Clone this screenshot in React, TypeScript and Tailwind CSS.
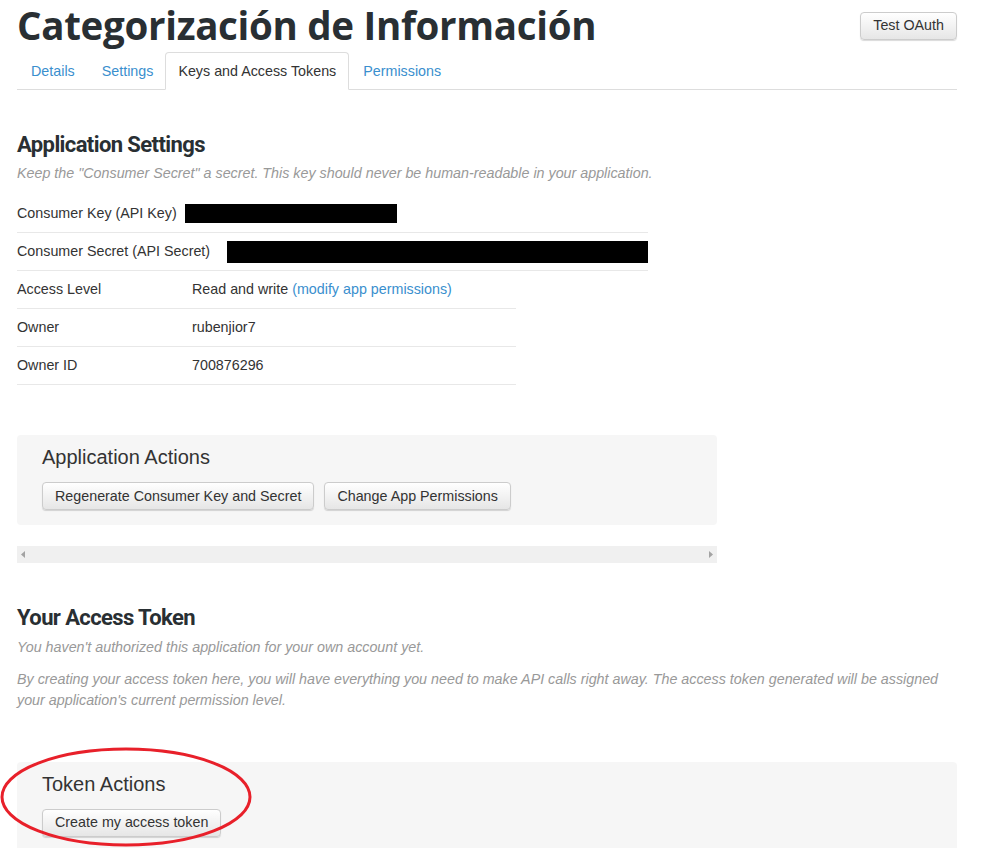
import React from 'react';

const body = { fontFamily: '"Liberation Sans", Arial, sans-serif' };
const heading = { fontFamily: 'Roboto, "Open Sans", sans-serif' };

function Btn({ children }: { children: React.ReactNode }) {
  return (
    <button className="h-[28px] px-3 text-[14.3px] text-[#333] border border-[#ccc] rounded-[4px] bg-gradient-to-b from-white to-[#e6e6e6] shadow-[0_1px_1px_rgba(0,0,0,0.15)] whitespace-nowrap">
      {children}
    </button>
  );
}

function Row({ label, children, width, labelWidth = 'w-[175px]' }: { label: string; children: React.ReactNode; width: string; labelWidth?: string }) {
  return (
    <div className={`flex items-center h-[38px] border-b border-[#e8e8e8] text-[14.3px] text-[#333] ${width}`}>
      <div className={labelWidth}>{label}</div>
      <div>{children}</div>
    </div>
  );
}

export default function App() {
  return (
    <div className="relative w-[992px] h-[848px] overflow-hidden bg-white px-[17px]" style={body}>
      {/* header */}
      <div className="flex items-start justify-between w-[940px] pt-[1px]">
        <h1 className="text-[38.5px] leading-[48px] font-bold text-[#292f33] tracking-[-0.3px]" style={{ fontFamily: '"Open Sans", sans-serif' }}>
          Categorización de Información
        </h1>
        <div className="mt-[11px]">
          <Btn>Test OAuth</Btn>
        </div>
      </div>

      {/* tabs */}
      <div className="flex w-[940px] border-b border-[#ddd] mt-[3px] text-[14.3px]">
        <a className="px-[14px] h-[37px] flex items-center pt-[2px] text-[#3a8fce]">Details</a>
        <a className="pl-[13px] pr-[12px] h-[37px] flex items-center pt-[2px] text-[#3a8fce]">Settings</a>
        <a className="px-[12px] h-[38px] -mb-px flex items-center pt-[2px] text-[#333] bg-white border border-[#ddd] border-b-white rounded-t-[4px]">Keys and Access Tokens</a>
        <a className="px-[14px] h-[37px] flex items-center pt-[2px] text-[#3a8fce]">Permissions</a>
      </div>

      {/* application settings */}
      <h2 className="mt-[42px] text-[22px] leading-[26px] font-bold text-[#292f33] tracking-[-0.6px]" style={heading}>
        Application Settings
      </h2>
      <p className="mt-[5px] text-[14.3px] italic text-[#999]">
        Keep the "Consumer Secret" a secret. This key should never be human-readable in your application.
      </p>
      <div className="mt-[11px]">
        <Row label="Consumer Key (API Key)" width="w-[631px]" labelWidth="w-[168px]">
          <div className="w-[212px] h-[19px] bg-black" />
        </Row>
        <Row label="Consumer Secret (API Secret)" width="w-[631px]" labelWidth="w-[211px]">
          <div className="w-[421px] h-[22px] bg-black" />
        </Row>
        <Row label="Access Level" width="w-[499px]">
          Read and write <span className="text-[#3a8fce]">(</span>
          <span className="text-[#3a8fce]">modify app permissions</span>
          <span className="text-[#3a8fce]">)</span>
        </Row>
        <Row label="Owner" width="w-[499px]">rubenjior7</Row>
        <Row label="Owner ID" width="w-[499px]">700876296</Row>
      </div>

      {/* application actions */}
      <div className="mt-[50px] w-[700px] bg-[#f6f6f6] rounded-[4px] px-[25px] pt-[9px] pb-[15px]">
        <div className="text-[20px] leading-[26px] text-[#333]">Application Actions</div>
        <div className="flex gap-[10px] mt-[12px]">
          <Btn>Regenerate Consumer Key and Secret</Btn>
          <Btn>Change App Permissions</Btn>
        </div>
      </div>

      {/* horizontal scrollbar */}
      <div className="mt-[21px] w-[700px] h-[17px] bg-[#f0f0f0] flex items-center justify-between px-[4px]">
        <svg width="4" height="7" viewBox="0 0 4 7"><path d="M4 0L0 3.5L4 7Z" fill="#a3a3a3" /></svg>
        <svg width="4" height="7" viewBox="0 0 4 7"><path d="M0 0L4 3.5L0 7Z" fill="#a3a3a3" /></svg>
      </div>

      {/* your access token */}
      <h2 className="mt-[42px] text-[22px] leading-[26px] font-bold text-[#292f33] tracking-[-0.6px]" style={heading}>
        Your Access Token
      </h2>
      <p className="mt-[6px] text-[14.3px] italic text-[#999]">
        You haven't authorized this application for your own account yet.
      </p>
      <p className="mt-[10px] text-[14.3px] leading-[21px] italic text-[#999] w-[940px]">
        By creating your access token here, you will have everything you need to make API calls right away. The access token generated will be assigned your application's current permission level.
      </p>

      {/* token actions */}
      <div className="mt-[51px] w-[940px] bg-[#f6f6f6] rounded-[4px] px-[25px] pt-[9px] pb-[15px]">
        <div className="text-[20px] leading-[26px] text-[#333]">Token Actions</div>
        <div className="flex gap-[10px] mt-[12px]">
          <Btn>Create my access token</Btn>
        </div>
      </div>

      {/* red annotation */}
      <svg className="absolute left-0 top-[745px]" width="256" height="103" viewBox="0 0 256 103">
        <ellipse cx="126" cy="52" rx="124" ry="48" fill="none" stroke="#e8202a" strokeWidth="3" />
      </svg>
    </div>
  );
}
